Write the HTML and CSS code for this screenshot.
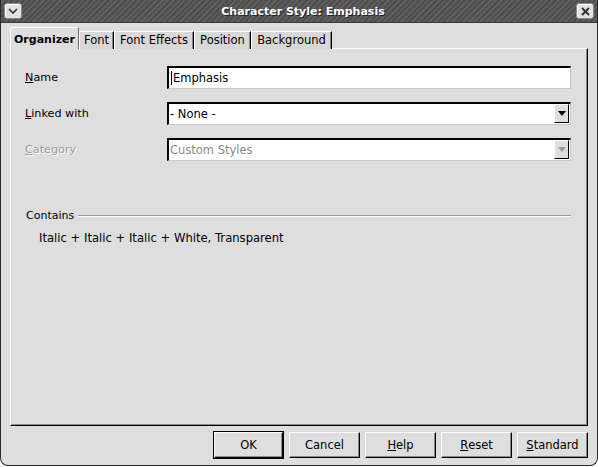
FILE: index.html
```html
<!DOCTYPE html>
<html>
<head>
<meta charset="utf-8">
<link rel="stylesheet" href="styles.css">
</head>
<body>
<div class="window">
  <div class="titlebar">
    <div class="tbtn menu-btn"><svg width="10" height="6" viewBox="0 0 10 6"><path d="M1 1 L5 5 L9 1" fill="none" stroke="#333" stroke-width="1.6"/></svg></div>
    <div class="title">Character Style: Emphasis</div>
    <div class="tbtn close-btn"><svg width="9" height="9" viewBox="0 0 9 9"><path d="M1 1 L8 8 M8 1 L1 8" stroke="#333" stroke-width="2"/></svg></div>
  </div>
  <div class="body">
    <div class="tabs">
      <div class="tab active">Organizer</div>
      <div class="tab">Font</div>
      <div class="tab">Font Effects</div>
      <div class="tab">Position</div>
      <div class="tab">Background</div>
    </div>
    <div class="panel">
      <div class="row">
        <div class="label"><u>N</u>ame</div>
        <div class="field"><span class="caret"></span>Emphasis</div>
      </div>
      <div class="row">
        <div class="label"><u>L</u>inked with</div>
        <div class="field combo"><span class="val">- None -</span><span class="dropbtn"><svg width="8" height="5" viewBox="0 0 8 5"><path d="M0 0 H8 L4 5 Z" fill="#000"/></svg></span></div>
      </div>
      <div class="row">
        <div class="label disabled"><u>C</u>ategory</div>
        <div class="field combo dis"><span class="val">Custom Styles</span><span class="dropbtn"><svg width="8" height="5" viewBox="0 0 8 5"><path d="M0 0 H8 L4 5 Z" fill="#9a9a9a"/></svg></span></div>
      </div>
      <div class="contains">
        <div class="group-head"><span>Contains</span><span class="rule"></span></div>
        <div class="contains-text">Italic + Italic + Italic + White, Transparent</div>
      </div>
    </div>
    <div class="buttons">
      <div class="btn default">OK</div>
      <div class="btn">Cancel</div>
      <div class="btn"><u>H</u>elp</div>
      <div class="btn"><u>R</u>eset</div>
      <div class="btn"><u>S</u>tandard</div>
    </div>
  </div>
</div>
</body>
</html>
```
FILE: styles.css
```css
html, body {
  margin: 0;
  padding: 0;
  background: #ffffff;
}
body {
  width: 598px;
  height: 467px;
  overflow: hidden;
  font-family: "DejaVu Sans", sans-serif;
  font-size: 11px;
  color: #000;
}
.window {
  width: 598px;
  height: 466px;
  box-sizing: border-box;
  background: #dedede;
  border: 1px solid #2a2a2a;
  border-top: none;
  border-radius: 0 0 8px 8px;
  display: flex;
  flex-direction: column;
  overflow: hidden;
}
.titlebar {
  height: 22px;
  flex: none;
  margin: 0 -1px;
  display: flex;
  align-items: center;
  background: repeating-linear-gradient(135deg, #4d4d4d 0px, #4d4d4d 2px, #5e5e5e 2px, #5e5e5e 4px);
  border-bottom: 1px solid #3a3a3a;
}
.tbtn {
  width: 18px;
  height: 16px;
  box-sizing: border-box;
  background: #e2e2e2;
  border: 1px solid #8a8a8a;
  border-radius: 3px;
  display: flex;
  align-items: center;
  justify-content: center;
  box-shadow: inset 1px 1px 0 #fff;
}
.menu-btn {
  margin-left: 4px;
}
.close-btn {
  margin-right: 4px;
}
.title {
  flex: 1;
  text-align: center;
  color: #fff;
  font-weight: bold;
  font-size: 11px;
  padding-left: 8px;
  text-shadow: 1px 1px 0 #222;
}
.body {
  flex: 1;
  display: flex;
  flex-direction: column;
  padding: 5px 9px 0 9px;
}
.tabs {
  display: flex;
  align-items: flex-end;
  height: 21px;
  position: relative;
  z-index: 1;
  margin-bottom: -1px;
}
.tab {
  height: 18px;
  box-sizing: border-box;
  text-align: center;
  font-size: 11.5px;
  line-height: 17px;
  border-left: 1px solid #fff;
  border-top: 1px solid #fff;
  border-right: 1px solid #000;
  box-shadow: inset -1px 0 0 #8c8c8c;
  background: #d8d8d8;
  white-space: nowrap;
}
.tab:nth-child(1) { width: 69px; }
.tab:nth-child(2) { width: 35px; }
.tab:nth-child(3) { width: 80px; }
.tab:nth-child(4) { width: 57px; }
.tab:nth-child(5) { width: 81px; }
.tab.active {
  height: 22px;
  font-size: 11px;
  font-weight: bold;
  background: #dedede;
  padding-top: 3px;
  border-right: 1px solid #6a6a6a;
  box-shadow: none;
  border-radius: 3px 0 0 0;
}
.panel {
  height: 378px;
  box-sizing: border-box;
  border-top: 1px solid #fff;
  border-left: 1px solid #fff;
  border-right: 1px solid #000;
  border-bottom: 1px solid #000;
  box-shadow: inset -1px -1px 0 #8c8c8c;
  padding: 17px 16px 0 14px;
  display: flex;
  flex-direction: column;
  gap: 14px;
}
.row {
  display: flex;
  align-items: center;
  height: 22px;
}
.label {
  width: 142px;
  flex: none;
  padding-top: 1px;
  font-size: 11.2px;
}
.label.disabled {
  color: #9a9a9a;
  text-shadow: 1px 1px 0 #fff;
}
.field {
  width: 404px;
  height: 23px;
  box-sizing: border-box;
  background: #fff;
  border-top: 2px solid #000;
  border-left: 2px solid #000;
  border-right: 1px solid #c8c8c8;
  border-bottom: 1px solid #c8c8c8;
  display: flex;
  align-items: center;
  padding-left: 1px;
  font-size: 11.5px;
}
.caret {
  display: inline-block;
  width: 1px;
  height: 14px;
  background: #000;
  margin-right: 1px;
  margin-left: 1px;
}
.combo .val {
  flex: 1;
}
.field.dis {
  color: #8a8a8a;
}
.dropbtn {
  width: 15px;
  height: 19px;
  box-sizing: border-box;
  margin-right: 1px;
  border-top: 1px solid #fff;
  border-left: 1px solid #fff;
  border-right: 1px solid #000;
  border-bottom: 1px solid #000;
  background: #dedede;
  display: flex;
  align-items: center;
  justify-content: center;
}
.contains {
  margin-top: 35px;
  margin-left: 1px;
}
.group-head {
  display: flex;
  align-items: center;
  gap: 4px;
}
.rule {
  flex: 1;
  height: 0;
  border-top: 1px solid #9a9a9a;
  border-bottom: 1px solid #fff;
  margin-top: 1px;
}
.contains-text {
  margin-top: 9px;
  padding-left: 13px;
  font-size: 11.6px;
}
.buttons {
  display: flex;
  justify-content: flex-end;
  gap: 5px;
  padding-top: 6px;
}
.btn {
  width: 71px;
  height: 26px;
  box-sizing: border-box;
  border-top: 1px solid #fff;
  border-left: 1px solid #fff;
  border-right: 1px solid #000;
  border-bottom: 1px solid #000;
  box-shadow: inset -1px -1px 0 #8c8c8c;
  display: flex;
  align-items: center;
  justify-content: center;
  font-size: 11.5px;
}
.btn.default {
  outline: 1px solid #000;
  width: 69px;
  margin-right: 1px;
}
```
